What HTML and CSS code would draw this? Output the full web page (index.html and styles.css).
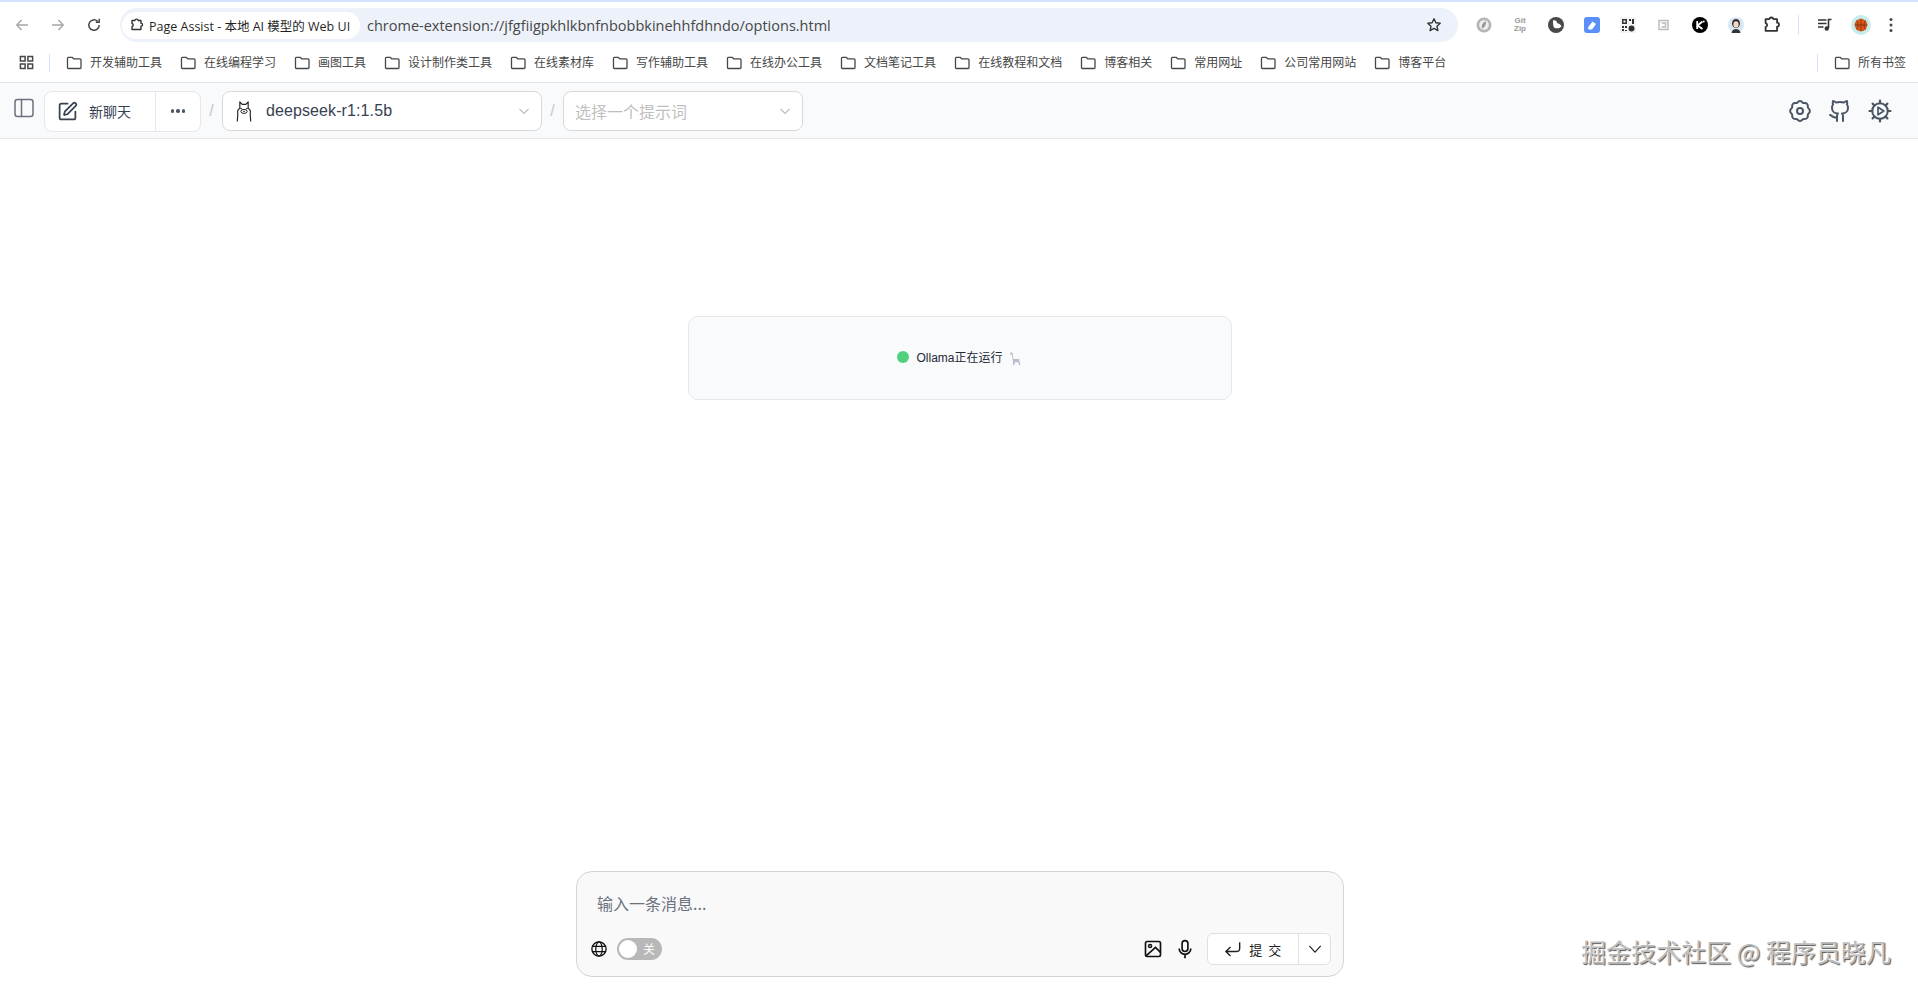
FILE: index.html
```html
<!DOCTYPE html>
<html lang="zh-CN">
<head>
  <meta charset="UTF-8" />
  <title>Page Assist - 本地 AI 模型的 Web UI</title>
  <link rel="stylesheet" href="styles.css">
</head>
<body>
  <svg class="defs" width="0" height="0">
    <symbol id="folder" viewBox="0 0 16 16"><path d="M1.500 3.200c0-.5.4-.9.9-.9h3.800l1.500 1.500h6.400c.5 0 .9.4.9.9v7.900c0 .5-.4.9-.9.9H2.400c-.5 0-.9-.4-.9-.9z" fill="none" stroke="#474747" stroke-width="1.300"/></symbol>
    <symbol id="puzzle" viewBox="0 0 16 16"><path d="M5.600 2.800a1.900 1.900 0 0 1 3.700 0h3.200v3.100a1.700 1.700 0 0 1 0 3.600v3.700H2.300V9.800a1.800 1.800 0 0 0 0-3.500V2.800z" fill="none" stroke="#333" stroke-width="1.600" stroke-linejoin="round"/></symbol>
  </svg>

  <div class="tabstrip"></div>

  <div class="toolbar">
    <div class="nav-btns">
      <svg class="nav-icon" viewBox="0 0 16 16"><path d="M14 8H3M7.500 3 2.800 8l4.700 5" fill="none" stroke="#a3a6aa" stroke-width="1.400"/></svg>
      <svg class="nav-icon" viewBox="0 0 16 16"><path d="M2 8h11M8.500 3l4.700 5-4.700 5" fill="none" stroke="#a3a6aa" stroke-width="1.400"/></svg>
      <svg class="nav-icon" viewBox="0 0 16 16"><path d="M13.200 8a5.200 5.200 0 1 1-1.600-3.700M13.200 1.800v3.400H9.800" fill="none" stroke="#474747" stroke-width="1.500"/></svg>
    </div>
    <div class="omnibox">
      <div class="site-chip">
        <svg class="chip-icon"><use href="#puzzle"/></svg>
        <span>Page Assist - 本地 AI 模型的 Web UI</span>
      </div>
      <span class="url">chrome-extension://jfgfiigpkhlkbnfnbobbkinehhfdhndo/options.html</span>
      <svg class="star" viewBox="0 0 16 16"><path d="m8 1.800 1.900 4 4.300.5-3.200 3 .9 4.300L8 11.400l-3.900 2.200.9-4.300-3.200-3 4.300-.5z" fill="none" stroke="#333" stroke-width="1.400" stroke-linejoin="round"/></svg>
    </div>
    <div class="extensions">
      <svg class="ext" viewBox="0 0 16 16"><circle cx="8" cy="8" r="7.500" fill="#b5b5b5"/><circle cx="8" cy="8" r="4.800" fill="#eee"/><path d="M10 4.500C7 5 5 8 6 11.500 8 11 10.500 8 10 4.500z" fill="#999"/></svg>
      <div class="ext gitzip"><span>Git</span><span>Zip</span></div>
      <svg class="ext" viewBox="0 0 16 16"><circle cx="8" cy="8" r="8" fill="#4a4a4a"/><path d="M5 3.500c2.500-.5 4 .5 4 2.500 2 .5 4 1.500 4.500 3.500-2 2-5.500 2.500-7.500 1-1-1.500-1-5-1-7z" fill="#fff"/></svg>
      <svg class="ext" viewBox="0 0 16 16"><rect width="16" height="16" rx="3" fill="#5b8ff9"/><path d="m4 10.500 4.500-6 3.500 2.500-4 5.500H4.500z" fill="#fff"/></svg>
      <svg class="ext" viewBox="0 0 16 16"><rect width="16" height="16" fill="#f4f4f4"/><path d="M2 2h5v5H2zm1.500 1.500v2h2v-2zM9 2h2v2H9zm3 0h2v5h-2zM2 9h2v2H2zm3 0h2v2H5zm-3 3h2v2H2zm3 1h2v1H5z" fill="#333"/><circle cx="11.500" cy="11.500" r="3" fill="#333"/></svg>
      <svg class="ext" viewBox="0 0 16 16"><path d="M3 3.500h9v9H3zM5.500 6h4v4h-4" fill="none" stroke="#bdbdbd" stroke-width="1.500"/></svg>
      <svg class="ext" viewBox="0 0 16 16"><circle cx="8" cy="8" r="8" fill="#000"/><path d="M5.200 4v8M10.500 4.500 5.500 8.500l5 3.500" fill="none" stroke="#fff" stroke-width="1.800"/><circle cx="11.800" cy="4.500" r=".9" fill="#fff"/></svg>
      <svg class="ext" viewBox="0 0 16 16"><circle cx="8" cy="8" r="8" fill="#d7e6f5"/><ellipse cx="8" cy="6.500" rx="4" ry="4.500" fill="#3a2c28"/><ellipse cx="8" cy="7.500" rx="2.600" ry="3.300" fill="#f3d6c6"/><path d="M3.500 16c.5-3 2.500-4 4.500-4s4 1 4.500 4z" fill="#333"/></svg>
      <svg class="ext ext-large" viewBox="0 0 16 16"><use href="#puzzle"/></svg>
      <span class="ext-sep"></span>
      <svg class="ext" viewBox="0 0 16 16"><path d="M1 3h8.500M1 6.500h8.500M1 10h5.500" stroke="#333" stroke-width="1.500"/><path d="M11.500 11V2.500h3" fill="none" stroke="#333" stroke-width="1.600"/><circle cx="9.800" cy="11.500" r="2.200" fill="#333"/></svg>
      <div class="avatar">
        <svg viewBox="0 0 16 16"><circle cx="8" cy="8" r="6.300" fill="#d9591c"/><path d="M1.700 8h12.600M8 1.700v12.600M3.500 3.500c2 2.500 2 6.500 0 9M12.500 3.500c-2 2.500-2 6.500 0 9" fill="none" stroke="#6b2a0c" stroke-width=".7"/></svg>
      </div>
      <svg class="ext menu-dots" viewBox="0 0 16 16"><circle cx="8" cy="2.500" r="1.500" fill="#474747"/><circle cx="8" cy="8" r="1.500" fill="#474747"/><circle cx="8" cy="13.500" r="1.500" fill="#474747"/></svg>
    </div>
  </div>

  <div class="bookmarks">
    <svg class="apps" viewBox="0 0 16 16"><path d="M1.500 1.500h5v5h-5zM9.500 1.500h5v5h-5zM1.500 9.500h5v5h-5zM9.500 9.500h5v5h-5z" fill="none" stroke="#474747" stroke-width="1.600"/></svg>
    <span class="bm-sep"></span>
    <div class="bm"><svg><use href="#folder"/></svg>开发辅助工具</div>
    <div class="bm"><svg><use href="#folder"/></svg>在线编程学习</div>
    <div class="bm"><svg><use href="#folder"/></svg>画图工具</div>
    <div class="bm"><svg><use href="#folder"/></svg>设计制作类工具</div>
    <div class="bm"><svg><use href="#folder"/></svg>在线素材库</div>
    <div class="bm"><svg><use href="#folder"/></svg>写作辅助工具</div>
    <div class="bm"><svg><use href="#folder"/></svg>在线办公工具</div>
    <div class="bm"><svg><use href="#folder"/></svg>文档笔记工具</div>
    <div class="bm"><svg><use href="#folder"/></svg>在线教程和文档</div>
    <div class="bm"><svg><use href="#folder"/></svg>博客相关</div>
    <div class="bm"><svg><use href="#folder"/></svg>常用网址</div>
    <div class="bm"><svg><use href="#folder"/></svg>公司常用网站</div>
    <div class="bm"><svg><use href="#folder"/></svg>博客平台</div>
    <span class="bm-sep bm-sep-end"></span>
    <div class="bm bm-last"><svg><use href="#folder"/></svg>所有书签</div>
  </div>

  <header class="app-header">
    <svg class="side-toggle" viewBox="0 0 20 20"><rect x="1" y="1.500" width="18" height="17" rx="2.500" fill="none" stroke="#6b7280" stroke-width="1.500"/><path d="M7.500 1.500v17" stroke="#6b7280" stroke-width="1.500"/></svg>
    <div class="chat-group">
      <div class="new-chat">
        <svg viewBox="0 0 24 24"><path d="M12 3H5a2 2 0 0 0-2 2v14a2 2 0 0 0 2 2h14a2 2 0 0 0 2-2v-7" fill="none" stroke="#374151" stroke-width="2" stroke-linecap="round"/><path d="M18.375 2.625a1 1 0 0 1 3 3l-9.013 9.014a2 2 0 0 1-.853.505l-2.873.84a.5.5 0 0 1-.62-.62l.84-2.873a2 2 0 0 1 .506-.852z" fill="none" stroke="#374151" stroke-width="2" stroke-linejoin="round"/></svg>
        <span>新聊天</span>
      </div>
      <div class="more"><i></i><i></i><i></i></div>
    </div>
    <span class="slash">/</span>
    <div class="select model-select">
      <svg class="llama" viewBox="0 0 24 28"><path d="M7 11V3l2.800 3h4.400L17 3v8c2.500 1 3 3 2.500 5.500-.5 2 .5 5 .5 10M7 11c-2.500 1-3 3-2.500 5.500.5 2-.5 5-.5 10" fill="none" stroke="#222" stroke-width="1.400" stroke-linejoin="round"/><ellipse cx="12" cy="14.500" rx="3.800" ry="2.400" fill="none" stroke="#222" stroke-width="1.200"/><circle cx="8.500" cy="11" r="1" fill="#222"/><circle cx="15.500" cy="11" r="1" fill="#222"/><path d="M11 14.500h2" stroke="#222" stroke-width="1.200"/></svg>
      <span class="select-value">deepseek-r1:1.5b</span>
      <svg class="caret" viewBox="0 0 12 12"><path d="m1.500 4 4.500 4.500L10.500 4" fill="none" stroke="#bfbfbf" stroke-width="1.200"/></svg>
    </div>
    <span class="slash">/</span>
    <div class="select prompt-select">
      <span class="select-placeholder">选择一个提示词</span>
      <svg class="caret" viewBox="0 0 12 12"><path d="m1.500 4 4.500 4.500L10.500 4" fill="none" stroke="#bfbfbf" stroke-width="1.200"/></svg>
    </div>
    <div class="header-actions">
      <svg viewBox="0 0 24 24"><path d="M9.600 3.300c1.300-1.700 3.500-1.700 4.800 0 .5.600 1.200.9 2 .8 2.100-.3 3.700 1.300 3.400 3.400-.1.800.2 1.500.8 2 1.700 1.300 1.700 3.700 0 5-.6.500-.9 1.200-.8 2 .3 2.100-1.300 3.700-3.400 3.400-.8-.1-1.500.2-2 .8-1.300 1.700-3.500 1.700-4.800 0-.5-.6-1.200-.9-2-.8-2.100.3-3.700-1.300-3.400-3.400.1-.8-.2-1.500-.8-2-1.700-1.300-1.700-3.700 0-5 .6-.5.9-1.200.8-2-.3-2.100 1.300-3.700 3.400-3.400.8.100 1.500-.2 2-.8z" fill="none" stroke="#4b5563" stroke-width="2"/><circle cx="12" cy="12" r="3" fill="none" stroke="#4b5563" stroke-width="2"/></svg>
      <svg viewBox="0 0 24 24"><path d="M15 22v-4a4.800 4.800 0 0 0-1-3.500c3 0 6-2 6-5.500.08-1.250-.27-2.480-1-3.500.28-1.150.28-2.350 0-3.500 0 0-1 0-3 1.500-2.640-.5-5.360-.5-8 0C6 2 5 2 5 2c-.3 1.150-.3 2.350 0 3.500A5.403 5.403 0 0 0 4 9c0 3.500 3 5.500 6 5.500-.39.490-.68 1.050-.85 1.650-.17.600-.22 1.230-.15 1.850v4M9 18c-4.510 2-5-2-7-2" fill="none" stroke="#4b5563" stroke-width="2" stroke-linecap="round" stroke-linejoin="round"/></svg>
      <svg viewBox="0 0 24 24"><circle cx="12" cy="12" r="7.800" fill="none" stroke="#4b5563" stroke-width="2"/><path d="M12 1.500v2.700M12 19.800v2.700M1.500 12h2.700M19.800 12h2.700M4.600 4.600l1.900 1.900M17.500 17.500l1.900 1.900M4.600 19.400l1.900-1.900M17.500 6.500l1.900-1.900" stroke="#4b5563" stroke-width="2.200" stroke-linecap="round"/><path d="M10 8.200v7.600l5.800-3.800z" fill="none" stroke="#4b5563" stroke-width="1.700" stroke-linejoin="round"/></svg>
    </div>
  </header>

  <main class="content">
    <div class="status-card">
      <span class="status-dot"></span>
      <span class="status-text">Ollama正在运行</span>
      <svg class="status-emoji" viewBox="0 0 16 16"><path d="M2.500 1.500h2.300l.9 7h6.200l1.300 6.500h-1.500l-.6-3H7.500l-.8 3H5.200l.1-4L4 4H2.500z" fill="#bdbccb"/></svg>
    </div>

    <div class="composer">
      <div class="composer-input">输入一条消息...</div>
      <div class="composer-row">
        <svg class="tool-icon globe" viewBox="0 0 24 24"><circle cx="12" cy="12" r="9.500" fill="none" stroke="#111" stroke-width="1.800"/><ellipse cx="12" cy="12" rx="4.300" ry="9.500" fill="none" stroke="#111" stroke-width="1.600"/><path d="M3 8.500h18M3 15.500h18" stroke="#111" stroke-width="1.600"/></svg>
        <div class="toggle"><span class="knob"></span><span class="toggle-label">关</span></div>
        <div class="composer-right">
          <svg class="tool-icon wide" viewBox="0 0 24 24"><rect x="3" y="3" width="18" height="18" rx="2" fill="none" stroke="#111" stroke-width="2"/><circle cx="8.500" cy="8.500" r="1.800" fill="none" stroke="#111" stroke-width="1.800"/><path d="m4 20 11-10 6 6" fill="none" stroke="#111" stroke-width="2"/></svg>
          <svg class="tool-icon wide" viewBox="0 0 24 24"><rect x="8.500" y="2" width="7" height="13" rx="3.500" fill="none" stroke="#111" stroke-width="2"/><path d="M5 11.500a7 7 0 0 0 14 0M12 18.500V23" fill="none" stroke="#111" stroke-width="2"/></svg>
          <div class="submit-group">
            <div class="submit-btn">
              <svg viewBox="0 0 24 24"><path d="M20 4v7a4 4 0 0 1-4 4H4M9 9.500 3.500 15 9 20.500" fill="none" stroke="#222" stroke-width="1.700"/></svg>
              <span>提 交</span>
            </div>
            <div class="submit-caret">
              <svg viewBox="0 0 16 16"><path d="m1.500 4.500 6.500 7 6.500-7" fill="none" stroke="#222" stroke-width="1.400"/></svg>
            </div>
          </div>
        </div>
      </div>
    </div>

    <div class="watermark">掘金技术社区 @ 程序员晓凡</div>
  </main>
</body>
</html>
```

FILE: styles.css
```css
* { box-sizing: border-box; }
html, body { height: 100%; }
body { margin: 0; background: #fff; color: #1f1f1f; overflow: hidden; display: flex; flex-direction: column; font-family: "Liberation Sans", "Noto Sans CJK SC", sans-serif; }
.defs { position: absolute; }

/* browser chrome */
.tabstrip { height: 2px; background: #d3e3fd; flex: none; }
.toolbar { height: 46px; flex: none; display: flex; align-items: center; padding-left: 14px; }
.nav-btns { display: flex; gap: 20px; width: 106px; flex: none; }
.nav-icon { width: 16px; height: 16px; }
.omnibox { width: 1338px; height: 34px; flex: none; background: #edf2fa; border-radius: 17px; display: flex; align-items: center; padding: 0 16px 0 2px; }
.site-chip { width: 238px; height: 27px; flex: none; background: #fff; border-radius: 14px; display: flex; align-items: center; gap: 5px; padding-left: 8px; font-family: "Open Sans", "Noto Sans CJK SC", sans-serif; font-size: 12.500px; color: #1f1f1f; white-space: nowrap; }
.chip-icon { width: 14px; height: 14px; flex: none; }
.url { margin-left: 7px; flex: 1; font-family: "Open Sans", sans-serif; font-size: 14.500px; color: #474747; white-space: nowrap; }
.star { width: 16px; height: 16px; flex: none; }
.extensions { display: flex; align-items: center; margin-left: 18px; gap: 20px; }
.ext { width: 16px; height: 16px; flex: none; }
.ext-large { width: 18px; height: 18px; margin: 0 -1px; }
.gitzip { display: flex; flex-direction: column; align-items: center; font: bold 8px/8px "Liberation Sans", sans-serif; color: #9a9a9a; }
.ext-sep { width: 1px; height: 20px; background: #d3e3fd; margin: 0 -2px; }
.avatar { width: 20px; height: 20px; border-radius: 50%; background: #c6ecec; margin: 0 -2px; padding: 2px; flex: none; display: flex; }
.avatar svg { width: 16px; height: 16px; }
.menu-dots { margin-left: -6px; }

.bookmarks { height: 35px; flex: none; display: flex; align-items: center; padding: 0 0 7px 19px; border-bottom: 1px solid #e3e5e8; font-family: "Noto Sans CJK SC", sans-serif; font-size: 12px; color: #474747; }
.apps { width: 15px; height: 15px; flex: none; margin-top: 2px; }
.bm-sep { width: 1px; height: 18px; background: #d3e3fd; margin: 2px 16px 0 15px; flex: none; }
.bm-sep-end { margin: 2px 16px 0 auto; }
.bm { display: flex; align-items: center; gap: 8px; margin-right: 18px; white-space: nowrap; }
.bm svg { width: 16px; height: 16px; flex: none; margin-top: 2px; }
.bm-last { margin-right: 12px; }

/* app header */
.app-header { height: 56px; flex: none; display: flex; align-items: center; background: #f9fafb; border-bottom: 1px solid #e5e7eb; padding: 1px 26px 0 14px; }
.side-toggle { width: 20px; height: 20px; margin-right: 10px; margin-top: -6px; flex: none; }
.chat-group { width: 157px; height: 41px; flex: none; display: flex; background: #fff; border: 1px solid #e5e7eb; border-radius: 8px; }
.new-chat { width: 111px; display: flex; align-items: center; gap: 11px; padding-left: 12px; border-right: 1px solid #e5e7eb; font-size: 14px; color: #374151; }
.new-chat svg { width: 21px; height: 21px; flex: none; }
.more { flex: 1; display: flex; align-items: center; justify-content: center; gap: 2px; }
.more i { width: 3.500px; height: 3.500px; border-radius: 50%; background: #4b5563; }
.slash { width: 21px; text-align: center; flex: none; font-size: 16px; color: #c4c8ce; }
.select { height: 40px; flex: none; display: flex; align-items: center; background: #fff; border: 1px solid #d9d9d9; border-radius: 8px; font-size: 16px; }
.model-select { width: 320px; padding-left: 11px; }
.prompt-select { width: 240px; padding-left: 11px; }
.llama { width: 20px; height: 24px; flex: none; margin-right: 12px; }
.select-value { flex: 1; color: #374151; letter-spacing: .1px; }
.select-placeholder { flex: 1; color: #bfbfbf; font-family: "Noto Sans CJK SC", sans-serif; }
.caret { width: 12px; height: 12px; margin-right: 11px; flex: none; }
.header-actions { margin-left: auto; display: flex; gap: 16px; }
.header-actions svg { width: 24px; height: 24px; }

/* page content */
.content { flex: 1; position: relative; display: flex; flex-direction: column; align-items: center; padding: 177px 0 16px; }
.status-card { width: 544px; height: 84px; margin-left: 2px; background: #f9fafb; border: 1px solid #e5e7eb; border-radius: 10px; padding-bottom: 2px; display: flex; align-items: center; justify-content: center; font-size: 12px; color: #1f2937; }
.status-dot { width: 12px; height: 12px; border-radius: 50%; margin-right: 7px; background: #4fd17f; }
.status-text { margin: -2px 5px 0 0; }
.status-emoji { width: 15px; height: 15px; margin-top: 2px; }

.composer { width: 768px; height: 106px; margin: auto 0 0 2px; background: #f9f9f9; border: 1px solid #d4d4d4; border-radius: 16px; padding: 0 12px 0 13px; display: flex; flex-direction: column; }
.composer-input { padding: 16px 0 0 7px; height: 60px; font-family: "Noto Sans CJK SC", sans-serif; font-size: 16px; color: #6b7280; line-height: 30px; }
.composer-row { display: flex; align-items: center; height: 34px; }
.tool-icon { width: 18px; height: 18px; flex: none; }
.tool-icon.wide { width: 20px; height: 20px; }
.globe { margin-right: 9px; }
.toggle { position: relative; width: 45px; height: 22px; border-radius: 11px; background: #b8b8b8; flex: none; }
.knob { position: absolute; left: 2px; top: 2px; width: 18px; height: 18px; border-radius: 50%; background: #fff; }
.toggle-label { position: absolute; right: 7px; top: 0; font-size: 12px; line-height: 22px; color: #fff; font-family: "Noto Sans CJK SC", sans-serif; }
.composer-right { margin-left: auto; display: flex; align-items: center; gap: 12px; }
.submit-group { width: 124px; height: 32px; display: flex; background: #fff; border: 1px solid #e0e0e0; border-radius: 6px; }
.submit-btn { flex: 1; display: flex; align-items: center; justify-content: center; gap: 6px; border-right: 1px solid #e0e0e0; font-size: 13px; letter-spacing: 1.500px; color: #222; font-family: "Noto Sans CJK SC", sans-serif; }
.submit-btn svg { width: 20px; height: 20px; }
.submit-caret { width: 31px; display: flex; align-items: center; justify-content: center; }
.submit-caret svg { width: 14px; height: 14px; }

.watermark { position: absolute; right: 27px; bottom: 26px; font-family: "Noto Sans CJK SC", sans-serif; font-size: 25px; line-height: 32px; color: #bdbdbd; text-shadow: -1px -1px 0 #fff, 1px 1px 1px #555; white-space: nowrap; }
```
